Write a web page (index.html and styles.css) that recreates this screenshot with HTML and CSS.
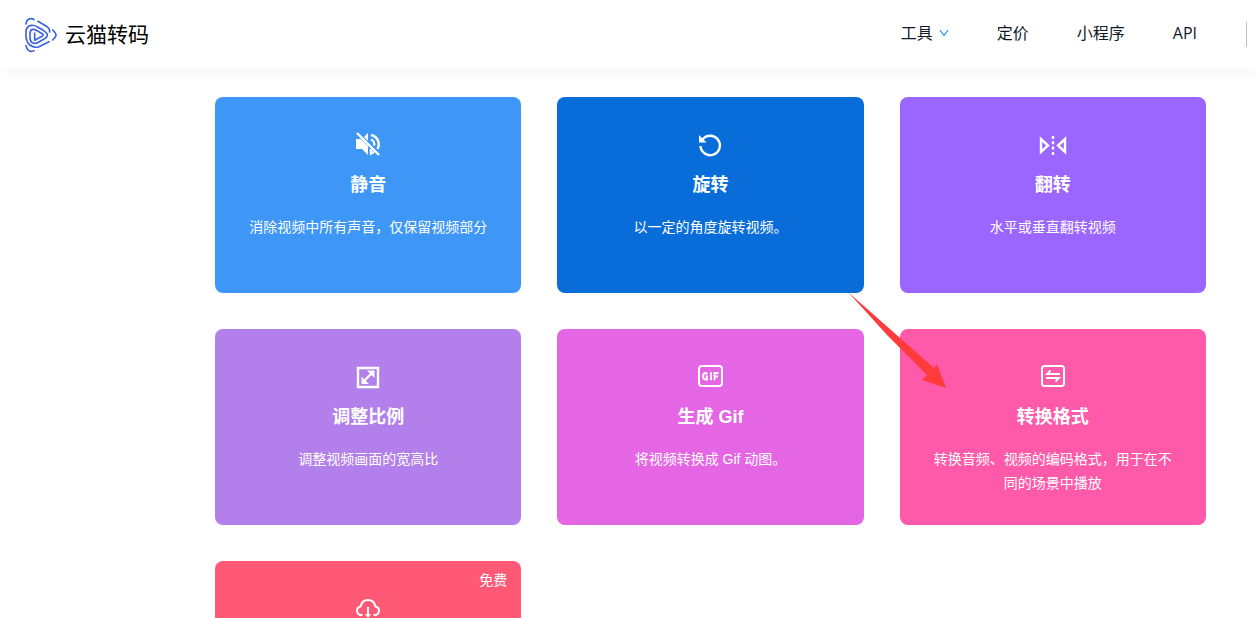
FILE: index.html
```html
<!DOCTYPE html>
<html lang="zh-CN">
<head>
<meta charset="utf-8">
<meta name="viewport" content="width=device-width, initial-scale=1">
<title>云猫转码</title>
<link rel="stylesheet" href="styles.css">
</head>
<body>
<header class="header">
  <a class="brand" href="#">
    <svg class="brand-mark" viewBox="72 48 102 108" aria-hidden="true">
      <path d="M78 69Q80 53 93 53Q99 53 102 56M78 134Q82 151 94 151Q99 151 102 149M158 87Q168 96 168 102Q168 108 158 117"/>
      <path d="M114 61L138 75Q150 82 149 93M147 122L117 137Q102 142 90 132Q78 122 78 104V92Q79 75 94 73Q103 72 111 77L130 88Q144 97 142 104Q141 110 131 115L115 124Q104 130 97 125Q90 121 90 110V96Q91 85 99 85Q104 85 109 88L127 98Q132 102 126 106L104 118V96"/>
    </svg>
    <span class="brand-name">云猫转码</span>
  </a>
  <nav class="nav">
    <a class="nav-link" href="#">工具
      <svg class="chevron" viewBox="0 0 10 8" aria-hidden="true"><path d="M1 1l4 5.500l4-5.500"/></svg>
    </a>
    <a class="nav-link" href="#">定价</a>
    <a class="nav-link" href="#">小程序</a>
    <a class="nav-link" href="#">API</a>
    <span class="nav-divider"></span>
  </nav>
</header>
<main class="tools">
  <a class="card card-mute" href="#">
    <svg class="icon" viewBox="0 0 28 28" aria-hidden="true">
      <path class="solid" d="M2 8h5l7 7v9l-6-6H2zM10 6l4-4v8z"/>
      <path d="M3 2l22 22M17 4a9.500 9.500 0 0 1 6.500 14M17 8.500a5 5 0 0 1 3 6M17 18v4.500l3-1.500"/>
    </svg>
    <h2 class="card-title">静音</h2>
    <p class="card-text">消除视频中所有声音，仅保留视频部分</p>
  </a>
  <a class="card card-rotate" href="#">
    <svg class="icon" viewBox="0 0 28 28" aria-hidden="true">
      <path d="M6.500 8.500A9.700 9.700 0 1 1 4.500 15"/>
      <path class="solid" d="M3 4v7.500h7.500z"/>
    </svg>
    <h2 class="card-title">旋转</h2>
    <p class="card-text">以一定的角度旋转视频。</p>
  </a>
  <a class="card card-flip" href="#">
    <svg class="icon" viewBox="0 0 28 28" aria-hidden="true">
      <path d="M2 8v13l7-6.500zM26 8v13l-7-6.500z"/>
      <path d="M14 5v19" stroke-dasharray="3 2.300"/>
    </svg>
    <h2 class="card-title">翻转</h2>
    <p class="card-text">水平或垂直翻转视频</p>
  </a>
  <a class="card card-ratio" href="#">
    <svg class="icon" viewBox="0 0 28 28" aria-hidden="true">
      <path d="M4 5h20v19H4zM9 19l10-10"/>
      <path class="solid" d="M13 7.500h7.500V15l-2.500-2.500l-2.500-2.500zM7.500 13.500V21H15z"/>
    </svg>
    <h2 class="card-title">调整比例</h2>
    <p class="card-text">调整视频画面的宽高比</p>
  </a>
  <a class="card card-gif" href="#">
    <svg class="icon" viewBox="0 0 28 28" aria-hidden="true">
      <rect class="frame" x="3" y="3" width="23" height="20" rx="3"/>
      <path class="thin" d="M11.500 11Q10.500 10 9.500 10Q7 10.500 7 13.300Q7 16.500 9.500 16.500H11V13.500H9.500M15 9.200V17.300M18.500 17.300V10H22.500M18.500 13.500H22"/>
    </svg>
    <h2 class="card-title">生成 Gif</h2>
    <p class="card-text">将视频转换成 Gif 动图。</p>
  </a>
  <a class="card card-format" href="#">
    <svg class="icon" viewBox="0 0 28 28" aria-hidden="true">
      <rect class="frame" x="3" y="3" width="22" height="20" rx="2.500"/>
      <path class="thin" d="M21 11H8L11.500 7.500M7 15H20L16.500 18.500"/>
    </svg>
    <h2 class="card-title">转换格式</h2>
    <p class="card-text">转换音频、视频的编码格式，用于在不同的场景中播放</p>
    <svg class="arrow" viewBox="0 0 98 96" aria-hidden="true"><path d="M0 0L86 76L89 72L98 96L74 88L79 83L40 44Z"/></svg>
  </a>
  <a class="card card-free" href="#" aria-label="免费">
    <span class="badge">免费</span>
    <svg class="icon" viewBox="0 0 28 28" aria-hidden="true">
      <path class="cloud" d="M8.500 20H7A4.300 4.300 0 0 1 6.500 11.500Q8 5 14 5Q20 5 21.500 11.500A4.300 4.300 0 0 1 21 20H19.500M14 12V22"/>
      <path class="solid" d="M11 19h6l-3 4z"/>
    </svg>
  </a>
</main>
</body>
</html>
```

FILE: styles.css
```css
* { box-sizing: border-box; }

body {
  margin: 0;
  height: 100vh;
  overflow: hidden;
  background: #fff;
  font-family: "Liberation Sans", "Noto Sans CJK SC", sans-serif;
}

a { color: inherit; text-decoration: none; }

.header {
  display: flex;
  align-items: center;
  justify-content: space-between;
  height: 69px;
  padding: 0 11px 0 24px;
  box-shadow: 0 2px 16px rgba(0, 0, 0, 0.05);
}

.brand { display: flex; align-items: center; gap: 7px; }

.brand-mark {
  width: 34px;
  height: 36px;
  fill: none;
  stroke: #3b63dc;
  stroke-width: 5;
  stroke-linecap: round;
  stroke-linejoin: round;
}

.brand-name {
  color: #000;
  font-size: 21px;
  line-height: 32px;
}

.nav {
  display: flex;
  align-items: center;
  gap: 48px;
  color: #111827;
  font-family: "Open Sans", "Noto Sans CJK SC", sans-serif;
  font-size: 16px;
  line-height: 24px;
}

.nav-link {
  display: flex;
  align-items: center;
  gap: 6px;
  padding-bottom: 3px;
}

.chevron {
  width: 10px;
  height: 8px;
  fill: none;
  stroke: #1890ff;
  stroke-width: 1.2;
}

.nav-divider { width: 1px; height: 25px; margin-left: 1px; background: #bfbfbf; }

.tools {
  display: grid;
  grid-template-columns: repeat(3, 1fr);
  gap: 36px;
  padding: 28px 52px 36px 215px;
}

.card {
  position: relative;
  display: flex;
  flex-direction: column;
  align-items: center;
  min-height: 196px;
  padding: 34px 32px 24px;
  border-radius: 8px;
  color: #fff;
  text-align: center;
}

.card-mute { background: #3e97f7; }
.card-rotate { background: #096dd9; }
.card-flip { background: #9b66ff; }
.card-ratio { background: #b27feb; }
.card-gif { background: #e566e5; }
.card-format { background: #ff59a9; }
.card-free { background: #ff5975; }

.icon {
  width: 28px;
  height: 28px;
  fill: none;
  stroke: #fff;
  stroke-width: 2.4;
}

.icon .solid { fill: #fff; stroke: none; }
.icon .thin { stroke-width: 1.8; }
.icon .frame,
.icon .cloud { stroke-width: 2; }

.card-title {
  margin: 12px 0 16px;
  font-size: 18px;
  line-height: 28px;
  font-weight: 700;
}

.card-text {
  margin: 0;
  font-size: 14px;
  line-height: 24px;
}

.badge {
  position: absolute;
  top: 8px;
  right: 14px;
  font-size: 14px;
  line-height: 22px;
}

.arrow {
  position: absolute;
  top: -37px;
  left: -52px;
  width: 98px;
  height: 96px;
  fill: #ff3b3b;
}
```
